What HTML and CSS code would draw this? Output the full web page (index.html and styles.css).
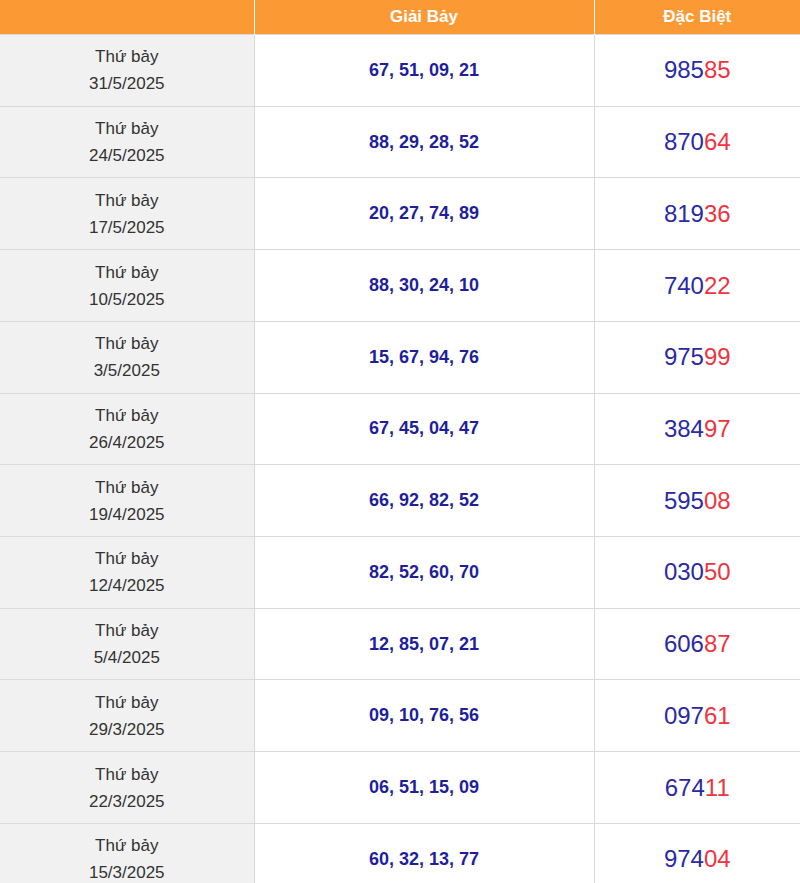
FILE: index.html
```html
<!DOCTYPE html>
<html lang="vi">
<head>
<meta charset="utf-8">
<title>Kết quả</title>
<link rel="stylesheet" href="styles.css">
</head>
<body>
<table class="results">
  <colgroup><col class="c-date"><col class="c-seven"><col class="c-special"></colgroup>
  <thead>
    <tr><th></th><th>Giải Bảy</th><th>Đặc Biệt</th></tr>
  </thead>
  <tbody>
    <tr><td class="date">Thứ bảy<br>31/5/2025</td><td class="seven">67, 51, 09, 21</td><td class="special">985<span class="tail">85</span></td></tr>
    <tr><td class="date">Thứ bảy<br>24/5/2025</td><td class="seven">88, 29, 28, 52</td><td class="special">870<span class="tail">64</span></td></tr>
    <tr><td class="date">Thứ bảy<br>17/5/2025</td><td class="seven">20, 27, 74, 89</td><td class="special">819<span class="tail">36</span></td></tr>
    <tr><td class="date">Thứ bảy<br>10/5/2025</td><td class="seven">88, 30, 24, 10</td><td class="special">740<span class="tail">22</span></td></tr>
    <tr><td class="date">Thứ bảy<br>3/5/2025</td><td class="seven">15, 67, 94, 76</td><td class="special">975<span class="tail">99</span></td></tr>
    <tr><td class="date">Thứ bảy<br>26/4/2025</td><td class="seven">67, 45, 04, 47</td><td class="special">384<span class="tail">97</span></td></tr>
    <tr><td class="date">Thứ bảy<br>19/4/2025</td><td class="seven">66, 92, 82, 52</td><td class="special">595<span class="tail">08</span></td></tr>
    <tr><td class="date">Thứ bảy<br>12/4/2025</td><td class="seven">82, 52, 60, 70</td><td class="special">030<span class="tail">50</span></td></tr>
    <tr><td class="date">Thứ bảy<br>5/4/2025</td><td class="seven">12, 85, 07, 21</td><td class="special">606<span class="tail">87</span></td></tr>
    <tr><td class="date">Thứ bảy<br>29/3/2025</td><td class="seven">09, 10, 76, 56</td><td class="special">097<span class="tail">61</span></td></tr>
    <tr><td class="date">Thứ bảy<br>22/3/2025</td><td class="seven">06, 51, 15, 09</td><td class="special">674<span class="tail">11</span></td></tr>
    <tr><td class="date">Thứ bảy<br>15/3/2025</td><td class="seven">60, 32, 13, 77</td><td class="special">974<span class="tail">04</span></td></tr>
  </tbody>
</table>
</body>
</html>
```

FILE: styles.css
```css
html, body {
  margin: 0;
  padding: 0;
  background: #ffffff;
}

body {
  font-family: "Liberation Sans", Arial, sans-serif;
  overflow: hidden;
}

.results {
  width: 800px;
  border-collapse: collapse;
  table-layout: fixed;
}

.c-date { width: 254px; }
.c-seven { width: 340px; }
.c-special { width: 206px; }

.results th {
  background: #fb9a35;
  color: #ffffff;
  font-weight: bold;
  font-size: 17px;
  height: 34px;
  padding: 0;
  text-align: center;
  border-left: 1px solid #ffffff;
  line-height: 20px;
}

.results th:first-child {
  border-left: none;
}

.results td {
  border: 1px solid #d9d9d9;
  text-align: center;
  padding: 0;
  height: 70.73px;
}

.results td:first-child {
  border-left: none;
}

.results td:last-child {
  border-right: none;
}

.date {
  background: #f1f1f1;
  color: #333333;
  font-size: 17px;
  line-height: 27px;
}

.seven {
  color: #1f1f9c;
  font-weight: bold;
  font-size: 18px;
}

.special {
  color: #2a2aa6;
  font-size: 24px;
}

.tail {
  color: #f0343f;
}
```
